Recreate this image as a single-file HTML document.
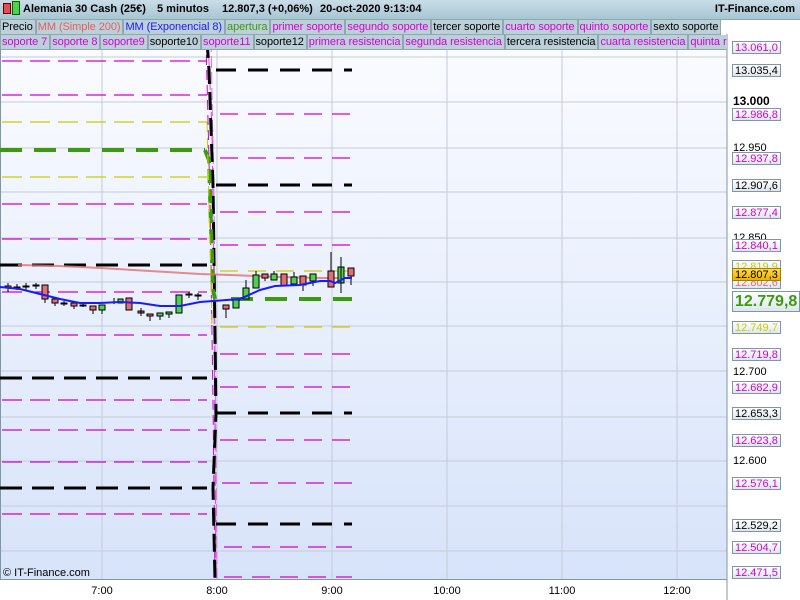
<!DOCTYPE html>
<html><head><meta charset="utf-8"><style>
body{margin:0;width:800px;height:600px;overflow:hidden;font-family:"Liberation Sans",sans-serif;background:#fff;position:relative}
#title{position:absolute;left:0;top:0;width:800px;height:19px;background:linear-gradient(#c9dde7,#a8c5d3);font-size:11px;font-weight:bold;line-height:19px;border-bottom:1px solid #8aa}
#title span{position:absolute;top:0;white-space:nowrap}
.row{position:absolute;left:0;height:15px;font-size:11px;line-height:14px;white-space:nowrap;display:flex;letter-spacing:-0.07px}
.row div{background:#bcd0da;border:1px solid #8fa7b3;border-top:none;padding:0 2px 0 1px;height:14px}
.m{color:#d400d4}.k{color:#000}
.lbl{position:absolute;left:732px;font-size:11px;line-height:12px;height:13px;padding:0 2px;border:1px solid #7f97a3;background:linear-gradient(#fff,#dde6ee);box-sizing:border-box}
.ax{position:absolute;left:733px;font-size:11px;line-height:12px}
.t{position:absolute;top:585px;font-size:11px;transform:translateX(-50%)}
</style></head><body>
<svg width="800" height="600" style="position:absolute;left:0;top:0">
<defs><linearGradient id="bg" x1="0" y1="0" x2="0" y2="1"><stop offset="0" stop-color="#fbfcff"/><stop offset="1" stop-color="#d7e3fa"/></linearGradient></defs>
<rect x="0" y="34" width="727" height="545" fill="url(#bg)"/>
<g stroke="#c4cbd8" stroke-width="1">
<line x1="0" y1="57" x2="727" y2="57"/><line x1="0" y1="102" x2="727" y2="102"/><line x1="0" y1="148" x2="727" y2="148"/><line x1="0" y1="192" x2="727" y2="192"/><line x1="0" y1="238" x2="727" y2="238"/><line x1="0" y1="282" x2="727" y2="282"/><line x1="0" y1="326" x2="727" y2="326"/><line x1="0" y1="371" x2="727" y2="371"/><line x1="0" y1="417" x2="727" y2="417"/><line x1="0" y1="461" x2="727" y2="461"/><line x1="0" y1="506" x2="727" y2="506"/><line x1="0" y1="551" x2="727" y2="551"/>
<line x1="102" y1="34" x2="102" y2="579"/><line x1="217" y1="34" x2="217" y2="579"/><line x1="332" y1="34" x2="332" y2="579"/><line x1="447" y1="34" x2="447" y2="579"/><line x1="562" y1="34" x2="562" y2="579"/><line x1="677" y1="34" x2="677" y2="579"/>
</g>
<line x1="0" y1="579.5" x2="727" y2="579.5" stroke="#7f97a3"/>
<line x1="0.5" y1="34" x2="0.5" y2="580" stroke="#7f97a3"/>
<g fill="none" stroke-dasharray="20,8">
<g stroke="#d000d0" stroke-width="1.2"><line x1="2" y1="61" x2="207" y2="61"/><line x1="2" y1="95" x2="207" y2="95"/><line x1="2" y1="204" x2="207" y2="204"/><line x1="2" y1="239" x2="207" y2="239"/><line x1="2" y1="292" x2="207" y2="292"/><line x1="2" y1="335" x2="207" y2="335"/><line x1="2" y1="400" x2="207" y2="400"/><line x1="2" y1="430" x2="207" y2="430"/><line x1="2" y1="462" x2="207" y2="462"/><line x1="2" y1="514" x2="207" y2="514"/></g>
<g stroke="#cccc00" stroke-width="1.2"><line x1="2" y1="122" x2="207" y2="122"/><line x1="2" y1="177" x2="207" y2="177"/></g>
</g>
<g fill="none" stroke="#000" stroke-width="3" stroke-dasharray="22,10"><line x1="0" y1="265" x2="207" y2="265"/><line x1="0" y1="378" x2="207" y2="378"/><line x1="0" y1="488" x2="207" y2="488"/></g>
<line x1="0" y1="150" x2="205" y2="150" stroke="#3c9a10" stroke-width="4" stroke-dasharray="22,12"/>
<g fill="none">
<path d="M208,40 L212,130 L214,300 L216,580" stroke="#e040e0" stroke-width="1" stroke-dasharray="14,4"/>
<path d="M206,40 L210,200 L213,400 L215,580" stroke="#d000d0" stroke-width="1" stroke-dasharray="10,5"/>
<path d="M211,40 L214,200 L217,580" stroke="#e070e0" stroke-width="1" stroke-dasharray="12,4"/>
<path d="M207,40 L209,70 L213,185 L216,413 L213,488 L215,580" stroke="#000" stroke-width="3" stroke-dasharray="18,8"/>
<path d="M205,150 L209,160 L213,290 L215,299" stroke="#3c9a10" stroke-width="4" stroke-dasharray="14,6"/>
<path d="M207,122 L212,327" stroke="#cccc00" stroke-width="1" stroke-dasharray="10,6"/>
</g>
<g fill="none" stroke-dasharray="20,12" stroke="#000" stroke-width="3"><line x1="216" y1="70" x2="352" y2="70"/><line x1="216" y1="185" x2="352" y2="185"/><line x1="216" y1="413" x2="352" y2="413"/><line x1="216" y1="524" x2="352" y2="524"/></g>
<g fill="none" stroke-dasharray="18,10" stroke="#d000d0" stroke-width="1.2"><line x1="220" y1="114" x2="352" y2="114"/><line x1="220" y1="158" x2="352" y2="158"/><line x1="220" y1="212" x2="352" y2="212"/><line x1="220" y1="245" x2="352" y2="245"/><line x1="220" y1="354" x2="352" y2="354"/><line x1="220" y1="387" x2="352" y2="387"/><line x1="220" y1="440" x2="352" y2="440"/><line x1="222" y1="483" x2="352" y2="483"/><line x1="224" y1="547" x2="352" y2="547"/><line x1="224" y1="577" x2="352" y2="577"/></g>
<g fill="none" stroke-dasharray="18,10" stroke="#cccc00" stroke-width="1.2"><line x1="220" y1="271" x2="352" y2="271"/><line x1="220" y1="327" x2="352" y2="327"/></g>
<line x1="231" y1="299" x2="352" y2="299" stroke="#3c9a10" stroke-width="4" stroke-dasharray="22,12"/>
<polyline fill="none" stroke="#e07070" stroke-width="2" opacity=".8" points="18,265 60,266 100,268 150,271 200,274 230,275 280,277 320,278 350,278"/>
<g stroke="#000" stroke-width="1">
<line x1="8" y1="283" x2="8" y2="292"/><rect x="5" y="286" width="6" height="2" fill="#e07070"/>
<line x1="17" y1="284" x2="17" y2="290"/><rect x="14" y="287" width="6" height="1" fill="#e07070"/>
<line x1="26" y1="283" x2="26" y2="290"/><rect x="23" y="286" width="6" height="1" fill="#000"/>
<line x1="36" y1="283" x2="36" y2="289"/><rect x="33" y="285" width="6" height="1" fill="#000"/>
<line x1="45" y1="285" x2="45" y2="303"/><rect x="42" y="285" width="6" height="14" fill="#e07070"/>
<rect x="52" y="299" width="6" height="4" fill="#e07070"/><line x1="55" y1="303" x2="55" y2="306"/>
<line x1="64" y1="301" x2="64" y2="306"/><rect x="61" y="303" width="6" height="1" fill="#000"/>
<rect x="71" y="303" width="6" height="3" fill="#e07070"/><line x1="74" y1="306" x2="74" y2="309"/>
<rect x="80" y="305" width="6" height="1" fill="#000"/><line x1="83" y1="302" x2="83" y2="307"/>
<rect x="90" y="306" width="6" height="4" fill="#e07070"/><line x1="93" y1="310" x2="93" y2="314"/>
<rect x="99" y="305" width="6" height="5" fill="#50d050"/><line x1="102" y1="310" x2="102" y2="314"/>
<line x1="114" y1="298" x2="114" y2="304"/><rect x="118" y="299" width="5" height="4" fill="#50d050"/>
<rect x="126" y="298" width="6" height="12" fill="#e07070"/>
<rect x="138" y="311" width="6" height="2" fill="#e07070"/><line x1="141" y1="308" x2="141" y2="316"/>
<rect x="147" y="314" width="6" height="2" fill="#e07070"/><line x1="150" y1="316" x2="150" y2="321"/>
<rect x="157" y="313" width="6" height="3" fill="#50d050"/><line x1="160" y1="316" x2="160" y2="320"/>
<rect x="166" y="312" width="6" height="2" fill="#50d050"/><line x1="169" y1="314" x2="169" y2="318"/>
<rect x="176" y="295" width="6" height="18" fill="#50d050"/>
<line x1="189" y1="292" x2="189" y2="298"/><rect x="186" y="294" width="6" height="1" fill="#000"/>
<line x1="198" y1="293" x2="198" y2="300"/><rect x="195" y="295" width="6" height="1" fill="#000"/>
<rect x="223" y="305" width="6" height="4" fill="#e07070"/><line x1="226" y1="309" x2="226" y2="318"/>
<rect x="233" y="300" width="6" height="8" fill="#50d050"/>
<rect x="243" y="288" width="6" height="11" fill="#50d050"/><line x1="246" y1="280" x2="246" y2="288"/>
<rect x="253" y="275" width="6" height="13" fill="#50d050"/><line x1="256" y1="271" x2="256" y2="275"/>
<rect x="262" y="274" width="6" height="4" fill="#e07070"/><line x1="265" y1="278" x2="265" y2="281"/>
<rect x="271" y="274" width="6" height="6" fill="#50d050"/><line x1="274" y1="271" x2="274" y2="274"/>
<rect x="281" y="274" width="6" height="12" fill="#e07070"/>
<rect x="291" y="277" width="6" height="7" fill="#50d050"/><line x1="294" y1="272" x2="294" y2="277"/>
<rect x="300" y="276" width="6" height="9" fill="#e07070"/><line x1="303" y1="285" x2="303" y2="291"/>
<rect x="310" y="274" width="6" height="7" fill="#50d050"/><line x1="313" y1="281" x2="313" y2="286"/>
<rect x="328" y="271" width="6" height="16" fill="#e07070"/><line x1="331" y1="252" x2="331" y2="271"/>
<rect x="338" y="267" width="6" height="16" fill="#50d050"/><line x1="341" y1="257" x2="341" y2="293"/>
<rect x="348" y="268" width="6" height="8" fill="#e07070"/><line x1="351" y1="276" x2="351" y2="285"/>
</g>
<polyline fill="none" stroke="#1a1aff" stroke-width="2" points="0,287 20,289 40,294 60,299 80,303 100,303 120,302 140,303 160,306 180,306 200,302 240,299 260,290 275,286 300,285 320,281 330,281 335,283 345,278 352,278"/>
<line x1="727" y1="34" x2="727" y2="600" stroke="#7f97a3"/>
</svg>
<div id="title"><span style="left:3px;top:3px;width:6px;height:9px;background:#e05050;border:1px solid #600"></span><span style="left:12px;top:1px;width:6px;height:12px;background:#50d050;border:1px solid #060"></span>
<span style="left:23px">Alemania 30 Cash (25€)</span><span style="left:157px">5 minutos</span><span style="left:222px">12.807,3 (+0,06%)</span><span style="left:320px">20-oct-2020 9:13:04</span><span style="right:5px">IT-Finance.com</span></div>
<div class="row" style="top:20px"><div class="k">Precio</div><div style="color:#e06060">MM (Simple 200)</div><div style="color:#1a1aff">MM (Exponencial 8)</div><div style="color:#3c9a10">apertura</div><div class="m">primer soporte</div><div class="m">segundo soporte</div><div class="k">tercer soporte</div><div class="m">cuarto soporte</div><div class="m">quinto soporte</div><div class="k">sexto soporte</div></div>
<div class="row" style="top:35px;width:727px;overflow:hidden"><div class="m">soporte 7</div><div class="m">soporte 8</div><div class="m">soporte9</div><div class="k">soporte10</div><div class="m">soporte11</div><div class="k">soporte12</div><div class="m">primera resistencia</div><div class="m">segunda resistencia</div><div class="k">tercera resistencia</div><div class="m">cuarta resistencia</div><div class="m">quinta resistencia</div></div>
<div class="lbl m" style="top:41px">13.061,0</div>
<div class="lbl k" style="top:64px">13.035,4</div>
<div class="ax" style="top:95px;font-weight:bold;font-size:12px">13.000</div>
<div class="lbl m" style="top:108px">12.986,8</div>
<div class="ax" style="top:142px">12.950</div>
<div class="lbl m" style="top:152px">12.937,8</div>
<div class="lbl k" style="top:179px">12.907,6</div>
<div class="lbl m" style="top:206px">12.877,4</div>
<div class="ax" style="top:232px">12.850</div>
<div class="lbl m" style="top:239px">12.840,1</div>
<div class="lbl" style="top:260px;color:#cccc00">12.819,9</div>
<div class="lbl" style="top:276px;color:#e07070">12.802,6</div>
<div class="lbl k" style="top:268px;background:linear-gradient(#ffd84a,#f0b000);border-color:#a08000">12.807,3</div>
<div class="lbl" style="top:291px;height:21px;font-size:16px;line-height:19px;font-weight:bold;color:#3c9a10">12.779,8</div>
<div class="lbl" style="top:321px;color:#cccc00">12.749,7</div>
<div class="lbl m" style="top:348px">12.719,8</div>
<div class="ax" style="top:366px">12.700</div>
<div class="lbl m" style="top:381px">12.682,9</div>
<div class="lbl k" style="top:407px">12.653,3</div>
<div class="lbl m" style="top:434px">12.623,8</div>
<div class="ax" style="top:455px">12.600</div>
<div class="lbl m" style="top:477px">12.576,1</div>
<div class="lbl k" style="top:519px">12.529,2</div>
<div class="lbl m" style="top:541px">12.504,7</div>
<div class="lbl m" style="top:566px">12.471,5</div>
<div style="position:absolute;left:3px;top:567px;font-size:11px">© IT-Finance.com</div>
<div class="t" style="left:102px">7:00</div><div class="t" style="left:217px">8:00</div><div class="t" style="left:332px">9:00</div><div class="t" style="left:447px">10:00</div><div class="t" style="left:562px">11:00</div><div class="t" style="left:677px">12:00</div>
</body></html>
